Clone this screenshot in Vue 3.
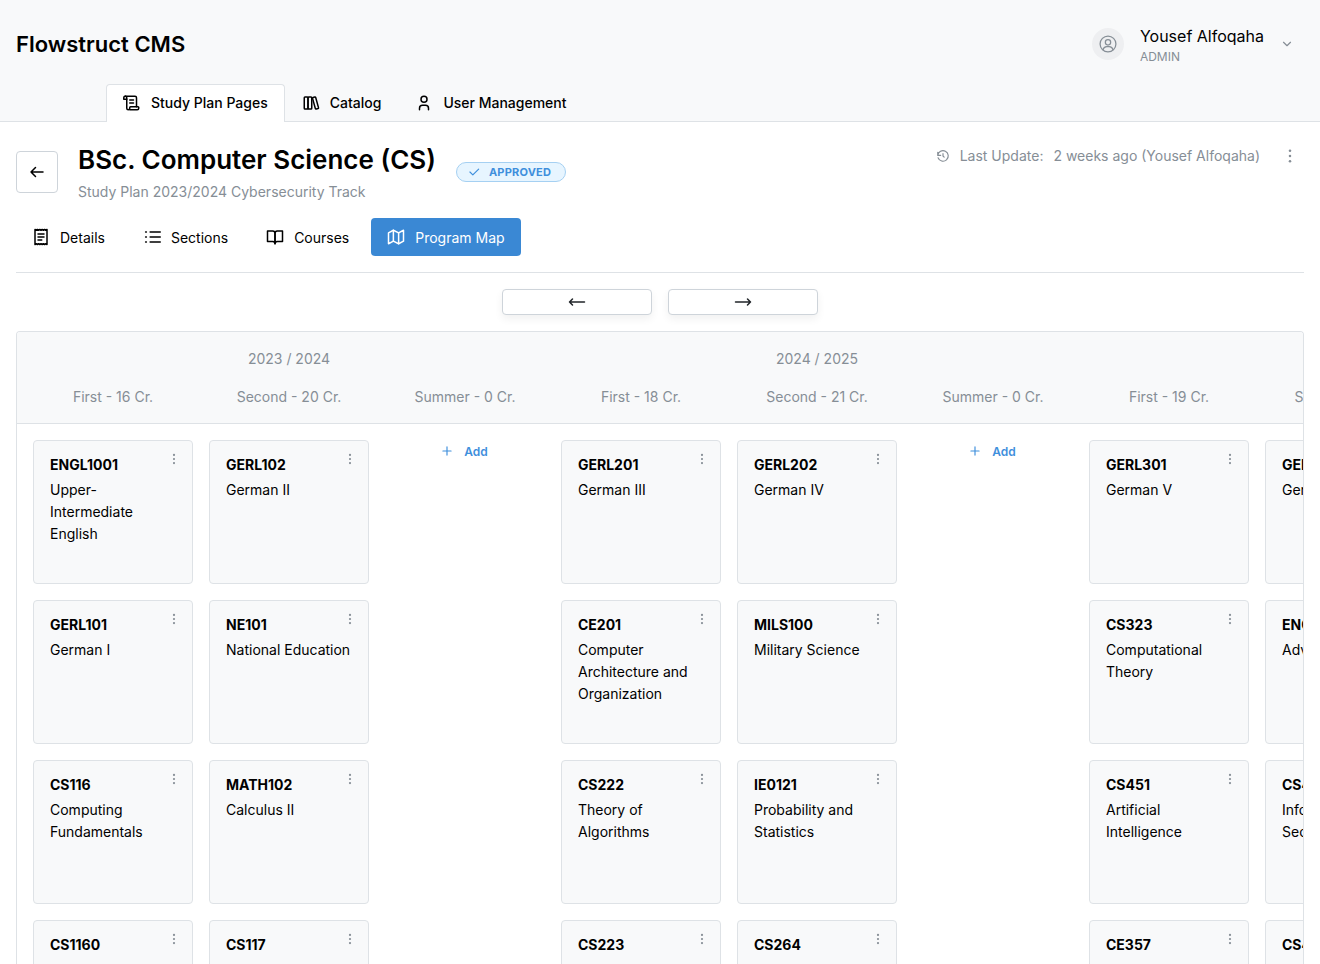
<template>
  <div class="page">
    <header class="topbar">
      <div class="topbar-main">
        <div class="brand">Flowstruct CMS</div>
        <div class="user">
          <div class="avatar">
            <svg width="20" height="20" viewBox="0 0 24 24" fill="none" stroke="currentColor" stroke-width="1.5" stroke-linecap="round" stroke-linejoin="round">
              <circle cx="12" cy="12" r="9.5" />
              <circle cx="12" cy="10" r="3.2" />
              <path d="M6 18.9c.6-2.3 2.4-3.7 4.5-3.7h3c2.100 0 3.900 1.400 4.500 3.700" />
            </svg>
          </div>
          <div class="user-info">
            <div class="user-name">Yousef Alfoqaha</div>
            <div class="user-role">ADMIN</div>
          </div>
          <svg class="chevron" width="14" height="14" viewBox="0 0 24 24" fill="none" stroke="currentColor" stroke-width="2" stroke-linecap="round" stroke-linejoin="round">
            <path d="M6 9l6 6 6-6" />
          </svg>
        </div>
      </div>
      <nav class="main-tabs">
        <a v-for="tab in mainTabs" :key="tab.label" class="main-tab" :class="{ active: tab.active }">
          <svg width="18" height="18" viewBox="0 0 24 24" fill="none" stroke="currentColor" stroke-width="2" stroke-linecap="round" stroke-linejoin="round">
            <path v-for="d in tab.paths" :key="d" :d="d" />
          </svg>
          {{ tab.label }}
        </a>
      </nav>
    </header>

    <main class="content">
      <section class="plan-head">
        <button class="back-btn">
          <svg width="18" height="18" viewBox="0 0 24 24" fill="none" stroke="currentColor" stroke-width="2" stroke-linecap="round" stroke-linejoin="round">
            <path d="M4 12h16M4 12l6 6M4 12l6-6" />
          </svg>
        </button>
        <div class="plan-title">
          <div class="title-row">
            <h1>BSc. Computer Science (CS)</h1>
            <span class="status">
              <svg width="14" height="14" viewBox="0 0 24 24" fill="none" stroke="currentColor" stroke-width="2" stroke-linecap="round" stroke-linejoin="round">
                <path d="M5 12l5 5L20 7" />
              </svg>
              APPROVED
            </span>
          </div>
          <div class="subtitle">Study Plan 2023/2024 Cybersecurity Track</div>
        </div>
        <div class="last-update">
          <svg width="14" height="14" viewBox="0 0 24 24" fill="none" stroke="currentColor" stroke-width="2" stroke-linecap="round" stroke-linejoin="round">
            <path d="M12 8v4l2 2" />
            <path d="M3.050 11a9 9 0 1 1 .5 4M3 5.500V11h5" />
          </svg>
          <span>Last Update:</span>
          <span>2 weeks ago (Yousef Alfoqaha)</span>
          <svg class="head-dots" width="18" height="18" viewBox="0 0 24 24" fill="currentColor">
            <circle cx="12" cy="5" r="1.700" />
            <circle cx="12" cy="12" r="1.700" />
            <circle cx="12" cy="19" r="1.700" />
          </svg>
        </div>
      </section>

      <nav class="sub-tabs">
        <a v-for="tab in subTabs" :key="tab.label" class="sub-tab" :class="{ active: tab.active }">
          <svg width="18" height="18" viewBox="0 0 24 24" fill="none" stroke="currentColor" stroke-width="2" stroke-linecap="round" stroke-linejoin="round">
            <path v-for="d in tab.paths" :key="d" :d="d" />
          </svg>
          {{ tab.label }}
        </a>
      </nav>

      <div class="scroll-btns">
        <button class="scroll-btn">
          <svg width="18" height="18" viewBox="0 0 24 24" fill="none" stroke="currentColor" stroke-width="2" stroke-linecap="round" stroke-linejoin="round">
            <path d="M2 12h20M2 12l4-4M2 12l4 4" />
          </svg>
        </button>
        <button class="scroll-btn">
          <svg width="18" height="18" viewBox="0 0 24 24" fill="none" stroke="currentColor" stroke-width="2" stroke-linecap="round" stroke-linejoin="round">
            <path d="M2 12h20M22 12l-4-4M22 12l-4 4" />
          </svg>
        </button>
      </div>

      <section class="map">
        <div class="map-track">
          <div class="map-head">
            <div v-for="(year, i) in years" :key="i" class="year">
              <div class="year-label">{{ year.label }}</div>
              <div class="terms">
                <div v-for="term in year.terms" :key="term" class="term">{{ term }}</div>
              </div>
            </div>
          </div>
          <div class="map-body">
            <div v-for="(col, i) in columns" :key="i" class="column">
              <template v-if="col.length">
                <article v-for="course in col" :key="course[0]" class="course">
                  <div class="course-code">{{ course[0] }}</div>
                  <div class="course-name">{{ course[1] }}</div>
                  <svg class="course-dots" width="14" height="14" viewBox="0 0 24 24" fill="currentColor">
                    <circle cx="12" cy="5" r="1.900" />
                    <circle cx="12" cy="12" r="1.900" />
                    <circle cx="12" cy="19" r="1.900" />
                  </svg>
                </article>
              </template>
              <a v-else class="add-link">
                <svg width="14" height="14" viewBox="0 0 24 24" fill="none" stroke="currentColor" stroke-width="2" stroke-linecap="round">
                  <path d="M12 5v14M5 12h14" />
                </svg>
                Add
              </a>
            </div>
          </div>
        </div>
      </section>
    </main>
  </div>
</template>

<script setup>
const mainTabs = [
  {
    label: 'Study Plan Pages',
    active: true,
    paths: [
      'M9 21h10a2 2 0 0 0 2-2v-1a1 1 0 0 0-1-1H10a1 1 0 0 0-1 1v1a2 2 0 0 1-4 0V5a2 2 0 0 0-2-2',
      'M3 3h13a2 2 0 0 1 2 2v12',
      'M3 3a2 2 0 0 0-2 2v2h4',
      'M9 8h5M9 12h5'
    ]
  },
  {
    label: 'Catalog',
    paths: [
      'M3 5a1 1 0 0 1 1-1h3a1 1 0 0 1 1 1v14a1 1 0 0 1-1 1H4a1 1 0 0 1-1-1z',
      'M8 5a1 1 0 0 1 1-1h3a1 1 0 0 1 1 1v14a1 1 0 0 1-1 1H9a1 1 0 0 1-1-1z',
      'M14.800 4.560l2.200-.53c.56-.135 1.130.19 1.280.73l3.700 13.420a1 1 0 0 1-.63 1.220l-2.300.57c-.56.135-1.130-.19-1.280-.73l-3.700-13.420a1 1 0 0 1 .73-1.260z'
    ]
  },
  {
    label: 'User Management',
    paths: [
      'M12 3a4 4 0 1 0 0 8 4 4 0 0 0 0-8z',
      'M6 21v-2a4 4 0 0 1 4-4h4a4 4 0 0 1 4 4v2'
    ]
  }
]

const subTabs = [
  {
    label: 'Details',
    paths: [
      'M4 2l1.600 1 1.600-1 1.600 1 1.600-1 1.600 1 1.600-1 1.600 1 1.600-1 1.600 1L20 2v20l-1.600-1-1.600 1-1.600-1-1.600 1-1.600-1-1.600 1-1.600-1-1.600 1-1.600-1L4 22z',
      'M8 8h8M8 12h8M8 16h5'
    ]
  },
  {
    label: 'Sections',
    paths: ['M9.500 5.300H23M9.500 12H23M9.500 18.700H23', 'M3.500 5.300h1M3.500 12h1M3.500 18.700h1']
  },
  {
    label: 'Courses',
    paths: [
      'M2 4h7a3 3 0 0 1 3 3v14a3 3 0 0 0-3-3H2z',
      'M22 4h-7a3 3 0 0 0-3 3v14a3 3 0 0 1 3-3h7z'
    ]
  },
  {
    label: 'Program Map',
    active: true,
    paths: [
      'M2 6.500L8.500 3l7 3.500L22 3v14.500L15.500 21l-7-3.500L2 21z',
      'M8.500 3v14.500M15.500 6.500V21'
    ]
  }
]

const years = [
  { label: '2023 / 2024', terms: ['First - 16 Cr.', 'Second - 20 Cr.', 'Summer - 0 Cr.'] },
  { label: '2024 / 2025', terms: ['First - 18 Cr.', 'Second - 21 Cr.', 'Summer - 0 Cr.'] },
  { label: '', terms: ['First - 19 Cr.', 'Second - 17 Cr.'] }
]

const columns = [
  [
    ['ENGL1001', 'Upper-Intermediate English'],
    ['GERL101', 'German I'],
    ['CS116', 'Computing Fundamentals'],
    ['CS1160', 'Computing Fundamentals Lab']
  ],
  [
    ['GERL102', 'German II'],
    ['NE101', 'National Education'],
    ['MATH102', 'Calculus II'],
    ['CS117', 'Object Oriented Programming']
  ],
  [],
  [
    ['GERL201', 'German III'],
    ['CE201', 'Computer Architecture and Organization'],
    ['CS222', 'Theory of Algorithms'],
    ['CS223', 'Data Structures']
  ],
  [
    ['GERL202', 'German IV'],
    ['MILS100', 'Military Science'],
    ['IE0121', 'Probability and Statistics'],
    ['CS264', 'Operating Systems']
  ],
  [],
  [
    ['GERL301', 'German V'],
    ['CS323', 'Computational Theory'],
    ['CS451', 'Artificial Intelligence'],
    ['CE357', 'Computer Networks']
  ],
  [
    ['GERL302', 'German VI'],
    ['ENGL2001', 'Advanced English'],
    ['CS481', 'Information Security'],
    ['CS482', 'Cryptography']
  ]
]
</script>

<style>
html,
body {
  margin: 0;
  background: #fff;
}
</style>

<style scoped>
.page {
  height: 964px;
  overflow: hidden;
  font-family: Inter, "Liberation Sans", sans-serif;
  color: #000;
  background: #fff;
}

.topbar {
  height: 122px;
  box-sizing: border-box;
  background: #f8f9fa;
  border-bottom: 1px solid #dee2e6;
}

.topbar-main {
  height: 84px;
  padding: 4px 16px 0;
  display: flex;
  align-items: center;
  justify-content: space-between;
  box-sizing: border-box;
}

.brand {
  font-size: 22px;
  font-weight: 600;
  line-height: 28px;
}

.user {
  display: flex;
  align-items: center;
  padding: 0 10px 0 0;
}

.avatar {
  width: 32px;
  height: 32px;
  border-radius: 50%;
  background: #eeeff1;
  color: #868e96;
  display: flex;
  align-items: center;
  justify-content: center;
  margin-right: 16px;
}

.user-info {
  padding-top: 2px;
}

.user-name {
  font-size: 16px;
  line-height: 24px;
  font-weight: 400;
}

.user-role {
  font-size: 12px;
  line-height: 18px;
  color: #868e96;
}

.chevron {
  margin-left: 16px;
  color: #868e96;
}

.main-tabs {
  display: flex;
  padding-left: 106px;
  height: 38px;
}

.main-tab {
  display: flex;
  align-items: center;
  gap: 10px;
  padding: 0 16px 2px;
  font-size: 14px;
  font-weight: 500;
  height: 38px;
  box-sizing: border-box;
  border: 1px solid transparent;
  border-bottom: 0;
  border-radius: 4px 4px 0 0;
}

.main-tab.active {
  background: #fff;
  border-color: #dee2e6;
}

.content {
  padding: 0 16px;
}

.plan-head {
  display: flex;
  align-items: flex-start;
  padding-top: 22px;
  height: 96px;
  box-sizing: border-box;
}

.back-btn {
  width: 42px;
  height: 42px;
  margin-top: 7px;
  margin-right: 20px;
  padding: 0;
  background: #fff;
  border: 1px solid #ced4da;
  border-radius: 4px;
  color: #000;
  display: flex;
  align-items: center;
  justify-content: center;
}

.plan-title {
  flex: 1;
}

.title-row {
  display: flex;
  align-items: flex-start;
  gap: 20px;
  height: 32px;
}

h1 {
  margin: 0;
  font-size: 26px;
  line-height: 32px;
  font-weight: 600;
}

.status {
  display: inline-flex;
  align-items: center;
  gap: 8px;
  height: 20px;
  box-sizing: border-box;
  padding: 0 14px 0 10px;
  margin-top: 18px;
  border: 1px solid #a5d0f2;
  border-radius: 10px;
  background: #e7f5ff;
  color: #3f8fdc;
  font-size: 11px;
  font-weight: 700;
  letter-spacing: 0.2px;
}

.subtitle {
  margin-top: 6px;
  font-size: 14px;
  line-height: 20px;
  color: #868e96;
}

.last-update {
  display: flex;
  align-items: center;
  gap: 8px;
  color: #868e96;
  font-size: 14px;
  line-height: 24px;
  padding-right: 5px;
}

.last-update span:first-of-type {
  margin-left: 2px;
}

.last-update span + span {
  margin-left: 2px;
}

.head-dots {
  margin-left: 13px;
}

.sub-tabs {
  display: flex;
  align-items: center;
  gap: 6px;
  height: 38px;
  padding-bottom: 16px;
  border-bottom: 1px solid #dee2e6;
}

.sub-tab {
  display: flex;
  align-items: center;
  gap: 10px;
  height: 38px;
  padding: 0 16px;
  font-size: 14px;
  border-radius: 4px;
}

.sub-tab.active {
  background: #3a88d4;
  color: #fff;
}

.scroll-btns {
  display: flex;
  justify-content: center;
  gap: 16px;
  padding: 16px 0;
}

.scroll-btn {
  width: 150px;
  height: 26px;
  padding: 0;
  background: #fff;
  border: 1px solid #ced4da;
  border-radius: 4px;
  box-shadow: 0 4px 8px rgba(0, 0, 0, 0.06);
  color: #212529;
  display: flex;
  align-items: center;
  justify-content: center;
}

.map {
  border: 1px solid #dee2e6;
  border-bottom: 0;
  border-radius: 4px 4px 0 0;
  overflow: hidden;
}

.map-track {
  width: max-content;
}

.map-head {
  display: flex;
  background: #f8f9fa;
  border-bottom: 1px solid #dee2e6;
  padding: 0 8px;
  height: 92px;
  box-sizing: border-box;
}

.year {
  text-align: center;
  color: #868e96;
  font-size: 14px;
}

.year-label {
  height: 20px;
  line-height: 20px;
  padding-top: 17px;
}

.terms {
  display: flex;
  margin-top: 18px;
}

.term {
  width: 176px;
  line-height: 20px;
}

.map-body {
  display: flex;
  padding: 16px 8px;
}

.column {
  width: 160px;
  padding: 0 8px;
  display: flex;
  flex-direction: column;
  gap: 16px;
}

.course {
  position: relative;
  height: 144px;
  box-sizing: border-box;
  padding: 14px 16px;
  background: #f8f9fa;
  border: 1px solid #dee2e6;
  border-radius: 4px;
  font-size: 14px;
}

.course-code {
  font-weight: 700;
  line-height: 20px;
}

.course-name {
  margin-top: 4px;
  line-height: 22px;
}

.course-dots {
  position: absolute;
  top: 11px;
  right: 11px;
  color: #868e96;
}

.add-link {
  display: flex;
  align-items: center;
  justify-content: center;
  gap: 10px;
  height: 22px;
  padding-right: 2px;
  color: #3f8fdc;
  font-size: 12px;
  font-weight: 600;
}
</style>
